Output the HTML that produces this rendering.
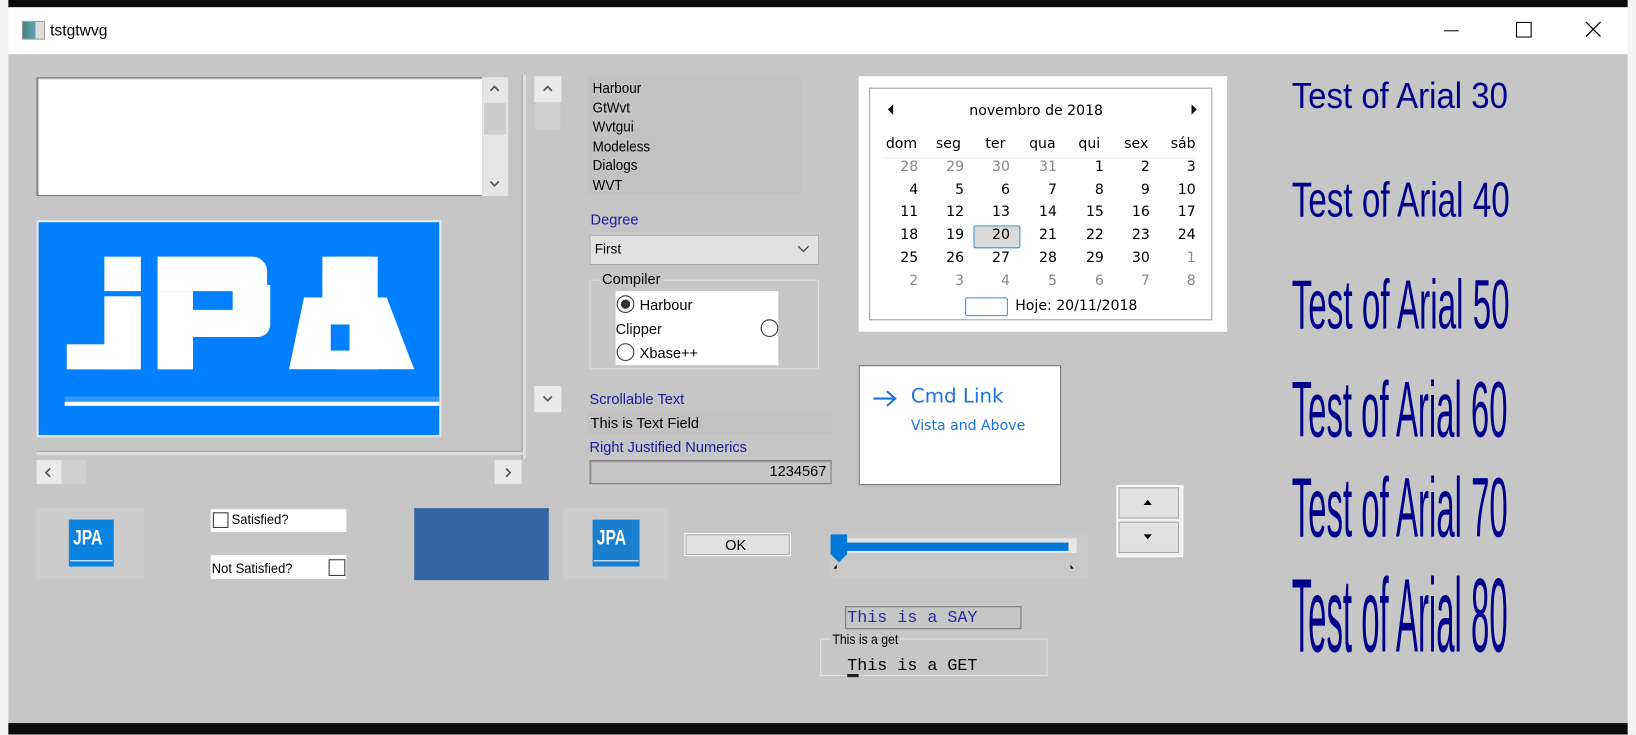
<!DOCTYPE html>
<html><head><meta charset="utf-8">
<style>
html,body{margin:0;padding:0;width:1636px;height:734px;overflow:hidden;background:#fff}
#w{position:absolute;left:0;top:0;width:1568px;height:704px;transform:scale(1.04337);transform-origin:0 0;font-family:"Liberation Sans",sans-serif}
.a{position:absolute}
.t{font-size:14px;color:#000;white-space:nowrap}
.n{font-family:"DejaVu Sans","Liberation Sans",sans-serif;font-size:13.5px}
.blue{color:#1a1aa0}
.arial{position:absolute;left:1238px;color:#00008b;white-space:nowrap;transform-origin:0 0;line-height:1}
.cal span{position:absolute;width:30px;text-align:right;font-family:"DejaVu Sans",sans-serif;font-size:13.5px}
</style></head><body>
<div id="w">
<div class="a" style="left:0;top:0;width:1568px;height:7px;background:#0c0c0c"></div>
<div class="a" style="left:0;top:693px;width:1568px;height:11px;background:#0c0c0c"></div>
<div class="a" style="left:0;top:0;width:8px;height:704px;background:#f2f2f2"></div>
<div class="a" style="left:1560px;top:0;width:8px;height:704px;background:#f4f4f4"></div>
<div class="a" style="left:8px;top:7px;width:1552px;height:45px;background:#fff"></div>
<div class="a" style="left:21px;top:20px;width:20px;height:16px;background:linear-gradient(90deg,#3a8a7a,#6aa0c0 60%,#ddd 60%);border:1px solid #999"></div>
<div class="a t" style="left:48px;top:21px;font-size:15px">tstgtwvg</div>
<div class="a" style="left:1384px;top:29px;width:14px;height:1px;background:#000"></div>
<div class="a" style="left:1453px;top:21px;width:13px;height:13px;border:1px solid #000"></div>
<svg class="a" style="left:1519px;top:20px" width="16" height="16"><path d="M1 1L15 15M15 1L1 15" stroke="#000" stroke-width="1.2"/></svg>
<div class="a" style="left:8px;top:52px;width:1552px;height:641px;background:#c6c6c6"></div>

<div class="a" style="left:35px;top:74px;width:426px;height:112px;background:#fff;border:1px solid #707070;box-shadow:inset 1px 1px 0 #a0a0a0"></div>
<div class="a" style="left:462px;top:74px;width:25px;height:114px;background:#e6e6e6"></div>
<div class="a" style="left:464px;top:99px;width:21px;height:30px;background:#cdcdcd"></div>
<svg class="a" style="left:468px;top:80px" width="12" height="10"><path d="M2 7L6 3L10 7" stroke="#555" stroke-width="1.6" fill="none"/></svg>
<svg class="a" style="left:468px;top:171px" width="12" height="10"><path d="M2 3L6 7L10 3" stroke="#555" stroke-width="1.6" fill="none"/></svg>
<div class="a" style="left:500px;top:72px;width:3px;height:368px;background:#e0e0e0;border-left:1px solid #999"></div>
<div class="a" style="left:35px;top:432px;width:466px;height:3px;background:#e0e0e0;border-top:1px solid #999"></div>
<div class="a" style="left:512px;top:73px;width:26px;height:323px;background:#c6c6c6"></div>
<div class="a" style="left:512px;top:73px;width:26px;height:25px;background:#eaeaea"></div>
<div class="a" style="left:513px;top:98px;width:24px;height:26px;background:#d0d0d0"></div>
<div class="a" style="left:512px;top:370px;width:26px;height:25px;background:#eaeaea"></div>
<svg class="a" style="left:519px;top:80px" width="12" height="10"><path d="M2 7L6 3L10 7" stroke="#555" stroke-width="1.6" fill="none"/></svg>
<svg class="a" style="left:519px;top:377px" width="12" height="10"><path d="M2 3L6 7L10 3" stroke="#555" stroke-width="1.6" fill="none"/></svg>

<div class="a" style="left:35px;top:211px;width:388px;height:208px;background:#e8e8e8"></div>
<div class="a" style="left:37px;top:213px;width:384px;height:204px;background:#0080ff;overflow:hidden">
 <div class="a" style="left:63px;top:33px;width:35px;height:33px;background:#fff"></div>
 <div class="a" style="left:63px;top:71px;width:35px;height:70px;background:#fff"></div>
 <div class="a" style="left:27px;top:117px;width:60px;height:24px;background:#fff"></div>
 <div class="a" style="left:114px;top:33px;width:105px;height:33px;background:#fff;border-top-right-radius:14px"></div>
 <div class="a" style="left:114px;top:66px;width:34px;height:75px;background:#fff"></div>
 <div class="a" style="left:186px;top:60px;width:36px;height:50px;background:#fff;border-bottom-right-radius:12px"></div>
 <div class="a" style="left:148px;top:84px;width:60px;height:26px;background:#fff"></div>
 <div class="a" style="left:272px;top:33px;width:48px;height:52px;background:#fff"></div>
 <div class="a" style="left:285px;top:33px;width:40px;height:108px;background:#fff"></div>
 <div class="a" style="left:240px;top:72px;width:120px;height:69px;background:#fff;clip-path:polygon(12% 0,78% 0,100% 100%,0 100%)"></div>
 <div class="a" style="left:280px;top:98px;width:18px;height:25px;background:#0080ff"></div>
 <div class="a" style="left:25px;top:172px;width:360px;height:4px;background:#fff"></div>
 <div class="a" style="left:25px;top:167px;width:360px;height:5px;background:#3399ff"></div>
</div>
<div class="a" style="left:35px;top:441px;width:465px;height:23px;background:#c6c6c6"></div>
<div class="a" style="left:35px;top:441px;width:24px;height:23px;background:#eaeaea"></div>
<div class="a" style="left:59px;top:441px;width:24px;height:23px;background:#d0d0d0"></div>
<div class="a" style="left:474px;top:441px;width:26px;height:23px;background:#eaeaea"></div>
<svg class="a" style="left:41px;top:447px" width="10" height="12"><path d="M7 2L3 6L7 10" stroke="#555" stroke-width="1.6" fill="none"/></svg>
<svg class="a" style="left:482px;top:447px" width="10" height="12"><path d="M3 2L7 6L3 10" stroke="#555" stroke-width="1.6" fill="none"/></svg>

<div class="a" style="left:563px;top:73px;width:205px;height:113px;background:#c2c2c2"></div>
<div class="a t" style="left:568px;top:75px;line-height:18.5px;transform:scaleX(0.92);transform-origin:0 0">Harbour<br>GtWvt<br>Wvtgui<br>Modeless<br>Dialogs<br>WVT</div>
<div class="a t blue" style="left:566px;top:202px">Degree</div>
<div class="a" style="left:565px;top:225px;width:218px;height:27px;background:#e1e1e1;border:1px solid #adadad"></div>
<div class="a t" style="left:570px;top:231px;font-size:13px">First</div>
<svg class="a" style="left:764px;top:233px" width="12" height="10"><path d="M1 3L6 8L11 3" stroke="#444" stroke-width="1.2" fill="none"/></svg>
<div class="a" style="left:565px;top:268px;width:218px;height:84px;border:1px solid #dcdcdc"></div>
<div class="a t" style="left:574px;top:259px;background:#c6c6c6;padding:0 3px">Compiler</div>
<div class="a" style="left:590px;top:279px;width:156px;height:71px;background:#fff"></div>
<div class="a" style="left:591px;top:283px;width:15px;height:15px;border:1px solid #333;border-radius:50%"></div>
<div class="a" style="left:595px;top:287px;width:9px;height:9px;background:#333;border-radius:50%"></div>
<div class="a t" style="left:613px;top:284px">Harbour</div>
<div class="a t" style="left:590px;top:307px;color:#111">Clipper</div>
<div class="a" style="left:729px;top:306px;width:15px;height:15px;border:1px solid #333;border-radius:50%;background:#fff"></div>
<div class="a" style="left:591px;top:329px;width:15px;height:15px;border:1px solid #333;border-radius:50%"></div>
<div class="a t" style="left:613px;top:330px">Xbase++</div>

<div class="a t blue" style="left:565px;top:374px">Scrollable Text</div>
<div class="a" style="left:563px;top:394px;width:234px;height:22px;background:#c2c2c2"></div>
<div class="a t" style="left:566px;top:397px">This is Text Field</div>
<div class="a t blue" style="left:565px;top:420px">Right Justified Numerics</div>
<div class="a" style="left:565px;top:441px;width:230px;height:21px;background:#c6c6c6;border:1px solid #7a7a7a;box-shadow:inset 1px 1px 0 #9a9a9a"></div>
<div class="a t" style="left:700px;top:443px;width:92px;text-align:right">1234567</div>

<div class="a" style="left:823px;top:73px;width:353px;height:245px;background:#fff"></div>
<div class="a" style="left:833px;top:84px;width:327px;height:221px;border:1px solid #a0a0a0"></div>
<svg class="a" style="left:850px;top:100px" width="8" height="10"><path d="M6 0L1 5L6 10Z" fill="#000"/></svg>
<svg class="a" style="left:1141px;top:100px" width="8" height="10"><path d="M1 0L6 5L1 10Z" fill="#000"/></svg>
<div class="a n" style="left:929px;top:98px">novembro de 2018</div>
<div class="a" style="left:846px;top:151px;width:300px;height:1px;background:#eee"></div>
<div class="cal">
<span style="left:844px;top:130px;width:40px;text-align:center">dom</span>
<span style="left:889px;top:130px;width:40px;text-align:center">seg</span>
<span style="left:934px;top:130px;width:40px;text-align:center">ter</span>
<span style="left:979px;top:130px;width:40px;text-align:center">qua</span>
<span style="left:1024px;top:130px;width:40px;text-align:center">qui</span>
<span style="left:1069px;top:130px;width:40px;text-align:center">sex</span>
<span style="left:1114px;top:130px;width:40px;text-align:center">sáb</span>
</div>
<div class="a" style="left:933px;top:216px;width:43px;height:20px;background:#d9d9d9;border:1px solid #3c8fd6;border-radius:2px"></div>
<div class="cal" id="cal"></div>
<div class="a" style="left:925px;top:285px;width:39px;height:16px;border:1.5px solid #3c8fd6;border-radius:2px"></div>
<div class="a n" style="left:973px;top:285px">Hoje: 20/11/2018</div>

<div class="a" style="left:823px;top:350px;width:192px;height:113px;background:#fff;border:1px solid #6a6a6a"></div>
<svg class="a" style="left:836px;top:373px" width="26" height="18"><path d="M1 9H22M14 2L22 9L14 16" stroke="#1a73e0" stroke-width="2" fill="none"/></svg>
<div class="a" style="left:873px;top:369px;font-family:'DejaVu Sans',sans-serif;font-size:19px;color:#1a73e0">Cmd Link</div>
<div class="a" style="left:873px;top:400px;font-family:'DejaVu Sans',sans-serif;font-size:13.5px;color:#1a73e0">Vista and Above</div>

<div class="a" style="left:1070px;top:465px;width:62px;height:67px;background:#f0f0f0;border:1px solid #fff"></div>
<div class="a" style="left:1072px;top:467px;width:58px;height:30px;background:#e1e1e1;border:1px solid #aaa;box-sizing:border-box"></div>
<div class="a" style="left:1072px;top:500px;width:58px;height:30px;background:#e1e1e1;border:1px solid #aaa;box-sizing:border-box"></div>
<svg class="a" style="left:1096px;top:479px" width="8" height="5"><path d="M0 5L4 0L8 5Z" fill="#000"/></svg>
<svg class="a" style="left:1096px;top:512px" width="8" height="5"><path d="M0 0L4 5L8 0Z" fill="#000"/></svg>

<div class="arial" style="top:75px;font-size:40px;transform:scale(0.79,0.87)">Test of Arial 30</div>
<div class="arial" style="top:168px;font-size:54px;transform:scale(0.59,0.88)">Test of Arial 40</div>
<div class="arial" style="top:259px;font-size:70px;transform:scale(0.455,0.95)">Test of Arial 50</div>
<div class="arial" style="top:356px;font-size:76px;transform:scale(0.415,0.99)">Test of Arial 60</div>
<div class="arial" style="top:447px;font-size:82px;transform:scale(0.385,0.99)">Test of Arial 70</div>
<div class="arial" style="top:539px;font-size:98px;transform:scale(0.322,1.03)">Test of Arial 80</div>

<div class="a" style="left:34px;top:487px;width:104px;height:68px;background:#cbcbcb"></div>
<div class="a" style="left:66px;top:498px;width:43px;height:45px;background:#0a84e0"></div>
<div class="a" style="left:70px;top:505px;font:bold 20px 'Liberation Sans',sans-serif;color:#fff;transform:scaleX(0.75);transform-origin:0 0">JPA</div>
<div class="a" style="left:67px;top:537px;width:41px;height:1px;background:#fff"></div>
<div class="a" style="left:202px;top:488px;width:130px;height:22px;background:#fff"></div>
<div class="a" style="left:204px;top:491px;width:13px;height:13px;border:1px solid #333"></div>
<div class="a t" style="left:222px;top:490px;font-size:13.5px;transform:scaleX(0.92);transform-origin:0 0">Satisfied?</div>
<div class="a" style="left:202px;top:532px;width:130px;height:23px;background:#fff"></div>
<div class="a t" style="left:203px;top:537px;font-size:13.5px;transform:scaleX(0.92);transform-origin:0 0">Not Satisfied?</div>
<div class="a" style="left:315px;top:536px;width:14px;height:14px;border:1px solid #333"></div>
<div class="a" style="left:397px;top:487px;width:129px;height:69px;background:#3465a4"></div>
<div class="a" style="left:540px;top:487px;width:100px;height:68px;background:#cbcbcb"></div>
<div class="a" style="left:568px;top:498px;width:45px;height:45px;background:#1a7fcf"></div>
<div class="a" style="left:572px;top:505px;font:bold 20px 'Liberation Sans',sans-serif;color:#fff;transform:scaleX(0.75);transform-origin:0 0">JPA</div>
<div class="a" style="left:569px;top:537px;width:43px;height:1px;background:#fff"></div>
<div class="a" style="left:656px;top:511px;width:100px;height:20px;background:#e1e1e1;border:1px solid #fff;outline:1px solid #adadad;outline-offset:-2px"></div>
<div class="a t" style="left:695px;top:514px">OK</div>
<div class="a" style="left:795px;top:512px;width:248px;height:42px;background:#c9c9c9"></div>
<div class="a" style="left:797px;top:516px;width:235px;height:14px;background:#e6e6e6"></div>
<div class="a" style="left:800px;top:520px;width:224px;height:8px;background:#0078d7"></div>
<svg class="a" style="left:796px;top:512px" width="16" height="27"><path d="M0 0H16V19L8 27L0 19Z" fill="#0078d7"/></svg>
<svg class="a" style="left:798px;top:538px" width="232" height="8"><path d="M1 7L4 3V7Z M228 3L231 7H228Z" fill="#000"/></svg>
<div class="a" style="left:810px;top:581px;width:167px;height:20px;border:1px solid #777"></div>
<div class="a" style="left:812px;top:583px;font:16px 'Liberation Mono',monospace;color:#2a2aa8;white-space:pre">This is a SAY</div>
<div class="a" style="left:786px;top:612px;width:216px;height:34px;border:1px solid #e0e0e0"></div>
<div class="a t" style="left:796px;top:605px;font-size:13px;background:#c6c6c6;padding:0 2px;transform:scaleX(0.9);transform-origin:0 0">This is a get</div>
<div class="a" style="left:812px;top:629px;font:16px 'Liberation Mono',monospace;color:#000;white-space:pre">This is a GET</div>
<div class="a" style="left:812px;top:646px;width:11px;height:3px;background:#222"></div>
</div>
<script>
var rows=[[28,29,30,31,1,2,3],[4,5,6,7,8,9,10],[11,12,13,14,15,16,17],[18,19,20,21,22,23,24],[25,26,27,28,29,30,1],[2,3,4,5,6,7,8]];
var xr=[880,924,968,1013,1058,1102,1146],h='';
rows.forEach(function(r,i){r.forEach(function(d,j){var g=(i==0&&j<4)||(i==4&&j==6)||i==5;
h+='<span style="left:'+(xr[j]-30)+'px;top:'+(152+i*21.7)+'px;color:'+(g?'#888':'#000')+'">'+d+'</span>';});});
document.getElementById('cal').innerHTML=h;
</script>
</body></html>
